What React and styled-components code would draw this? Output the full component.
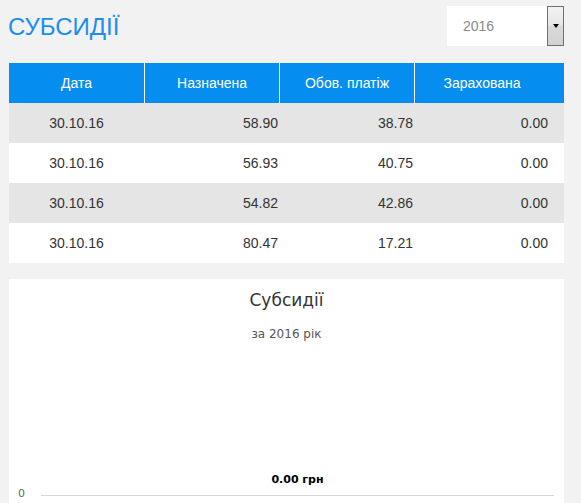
import React from 'react';
import * as styledComponents from "styled-components";

const styled = styledComponents.default || styledComponents;
const { createGlobalStyle } = styledComponents;

const rows = [
  { date: '30.10.16', assigned: '58.90', payment: '38.78', credited: '0.00' },
  { date: '30.10.16', assigned: '56.93', payment: '40.75', credited: '0.00' },
  { date: '30.10.16', assigned: '54.82', payment: '42.86', credited: '0.00' },
  { date: '30.10.16', assigned: '80.47', payment: '17.21', credited: '0.00' },
];

const GlobalStyle = createGlobalStyle`
  html, body {
    margin: 0;
    padding: 0;
    background: #f2f2f2;
    font-family: "Liberation Sans", Arial, sans-serif;
    overflow: hidden;
  }
`;

const Page = styled.div`
  width: 555px;
  padding: 6px 0 0 9px;
`;

const TopBar = styled.div`
  display: flex;
  justify-content: space-between;
  align-items: center;
  height: 40px;
  margin-bottom: 17px;
`;

const Title = styled.h1`
  margin: 2px 0 0 -1px;
  font-size: 24px;
  font-weight: normal;
  line-height: 28px;
  color: #1a8fee;
`;

const Select = styled.div`
  display: flex;
  width: 117px;
  height: 40px;
  background: #fff;
`;

const SelectValue = styled.div`
  flex: 1;
  display: flex;
  align-items: center;
  padding-left: 16px;
  font-size: 14px;
  color: #8a8a8a;
`;

const SelectButton = styled.div`
  width: 17px;
  box-sizing: border-box;
  border: 1px solid #707070;
  background: linear-gradient(#f2f2f2 0%, #e6e6e6 48%, #d9d9d9 52%, #d2d2d2 100%);
  display: flex;
  justify-content: center;
  padding-top: 17px;

  &::after {
    content: '';
    width: 0;
    height: 0;
    border-left: 3.5px solid transparent;
    border-right: 3.5px solid transparent;
    border-top: 4px solid #000;
  }
`;

const Table = styled.div`
  display: flex;
  flex-direction: column;
`;

const Row = styled.div`
  display: grid;
  grid-template-columns: repeat(4, 135px) 1fr;
  height: 40px;
  background: ${(p) => (p.$head ? '#058ef0' : p.$odd ? '#e5e5e5' : '#fff')};
  color: ${(p) => (p.$head ? '#fff' : '#333')};
  font-size: 14px;
`;

const Cell = styled.div`
  display: flex;
  align-items: center;
  justify-content: ${(p) => (p.$right ? 'flex-end' : 'center')};
  padding-right: ${(p) => (p.$right ? '1px' : '0')};
  border-left: ${(p) => (p.$divider ? '1px solid #fff' : 'none')};
`;

const ChartCard = styled.div`
  margin-top: 16px;
  background: #fff;
  height: 260px;
  padding-top: 10px;
  box-sizing: border-box;
  display: flex;
  flex-direction: column;
  align-items: center;
  font-family: "DejaVu Sans", "Lucida Grande", sans-serif;
`;

const ChartTitle = styled.div`
  font-size: 17px;
  line-height: 22px;
  color: #333;
`;

const ChartSubtitle = styled.div`
  margin-top: 15px;
  font-size: 12px;
  line-height: 16px;
  color: #555;
`;

const Plot = styled.svg`
  display: block;
  align-self: stretch;
  font-family: "DejaVu Sans", "Lucida Grande", sans-serif;
`;

export default function App() {
  return (
    <>
      <GlobalStyle />
      <Page>
        <TopBar>
          <Title>СУБСИДІЇ</Title>
          <Select>
            <SelectValue>2016</SelectValue>
            <SelectButton />
          </Select>
        </TopBar>

        <Table>
          <Row $head>
            <Cell>Дата</Cell>
            <Cell $divider>Назначена</Cell>
            <Cell $divider>Обов. платіж</Cell>
            <Cell $divider>Зарахована</Cell>
          </Row>
          {rows.map((r, i) => (
            <Row key={i} $odd={i % 2 === 0}>
              <Cell>{r.date}</Cell>
              <Cell $right>{r.assigned}</Cell>
              <Cell $right>{r.payment}</Cell>
              <Cell $right>{r.credited}</Cell>
            </Row>
          ))}
        </Table>

        <ChartCard>
          <ChartTitle>Субсидії</ChartTitle>
          <ChartSubtitle>за 2016 рік</ChartSubtitle>
          {/* highcharts-style plot: single empty series, zero axis */}
          <Plot width="555" height="180" viewBox="0 0 555 180">
            <line x1="32" y1="153.5" x2="545" y2="153.5" stroke="#d6d6d6" strokeWidth="1" />
            <text x="16" y="155" textAnchor="end" fontSize="11" fill="#666">0</text>
            <text x="288.5" y="141" textAnchor="middle" fontSize="11" fontWeight="bold" fill="#000">0.00 грн</text>
          </Plot>
        </ChartCard>
      </Page>
    </>
  );
}
